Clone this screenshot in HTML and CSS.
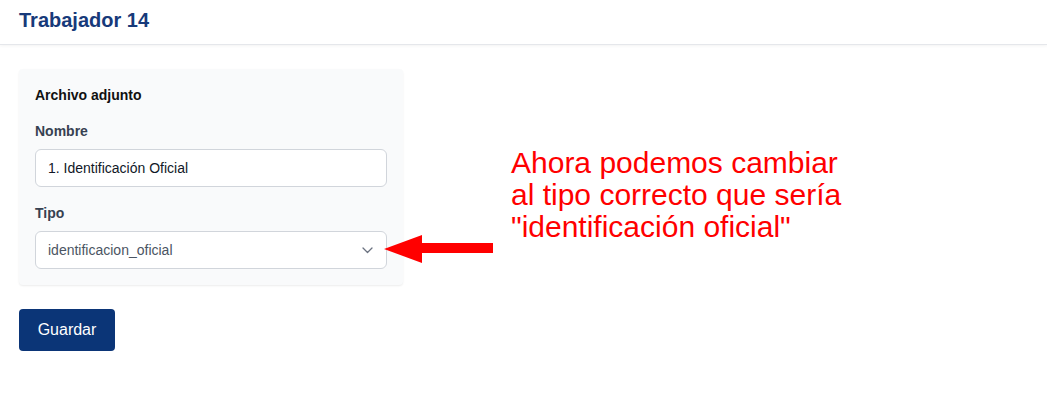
FILE: index.html
```html
<!DOCTYPE html>
<html lang="es">
<head>
<meta charset="utf-8">
<title>Trabajador 14</title>
<link rel="stylesheet" href="styles.css">
</head>
<body>
<header class="topbar">
  <h1 class="title">Trabajador 14</h1>
</header>
<main class="content">
  <section class="card">
    <h2 class="card-title">Archivo adjunto</h2>
    <div class="field">
      <label class="label">Nombre</label>
      <div class="input">1. Identificación Oficial</div>
    </div>
    <div class="field">
      <label class="label">Tipo</label>
      <div class="input select">
        <span class="select-value">identificacion_oficial</span>
        <svg class="chevron" width="11" height="7" viewBox="0 0 11 7"><path d="M1 1 L5.5 5.5 L10 1" fill="none" stroke="#6b7280" stroke-width="1.3" stroke-linecap="round" stroke-linejoin="round"/></svg>
      </div>
    </div>
  </section>
  <button class="btn">Guardar</button>
</main>
<svg class="arrow" width="112" height="32" viewBox="0 0 112 32"><polygon points="0,15 38,1 38,9 109,9 109,19 38,19 38,29" fill="#ff0000"/></svg>
<p class="note">Ahora podemos cambiar<br>al tipo correcto que sería<br>"identificación oficial"</p>
</body>
</html>
```
FILE: styles.css
```css
* { box-sizing: border-box; }
html, body { margin: 0; padding: 0; background: #ffffff; }
body {
  font-family: "Liberation Sans", Arial, Helvetica, sans-serif;
  color: #111827;
  position: relative;
  min-height: 403px;
}
.topbar {
  height: 45px;
  padding: 0 19px;
  display: flex;
  align-items: center;
  border-bottom: 1px solid #e5e7eb;
  box-shadow: 0 1px 3px rgba(0,0,0,0.05);
}
.title {
  margin: 0;
  font-size: 20px;
  font-weight: 700;
  color: #173a7a;
  line-height: 24px;
  padding-bottom: 4px;
}
.content {
  padding: 24px 19px;
}
.card {
  width: 384px;
  background: #f9fafb;
  border-radius: 4px;
  box-shadow: 0 1px 2px rgba(0,0,0,0.08);
  padding: 16px 16px 16px;
  display: flex;
  flex-direction: column;
  gap: 16px;
}
.card-title {
  margin: 0;
  font-size: 14px;
  line-height: 20px;
  font-weight: 700;
  color: #111111;
}
.field {
  display: flex;
  flex-direction: column;
  gap: 8px;
}
.label {
  font-size: 14px;
  line-height: 20px;
  font-weight: 700;
  color: #374151;
}
.input {
  height: 38px;
  background: #ffffff;
  border: 1px solid #d1d5db;
  border-radius: 6px;
  padding: 0 12px;
  display: flex;
  align-items: center;
  font-size: 14px;
  color: #111827;
}
.select { justify-content: space-between; }
.select-value { color: #4b5563; }
.chevron { margin-right: 1px; }
.btn {
  margin-top: 24px;
  width: 96px;
  height: 42px;
  border: 0;
  border-radius: 4px;
  background: #0b3577;
  color: #ffffff;
  font-family: "Liberation Sans", Arial, Helvetica, sans-serif;
  font-size: 16px;
  display: block;
}
.arrow {
  position: absolute;
  left: 384px;
  top: 234px;
}
.note {
  position: absolute;
  left: 511px;
  top: 147px;
  margin: 0;
  font-size: 30px;
  line-height: 32px;
  color: #ff0000;
  white-space: nowrap;
}
```
